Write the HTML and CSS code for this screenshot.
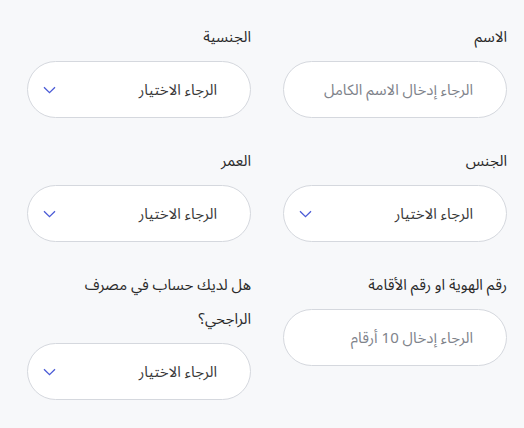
FILE: index.html
```html
<!DOCTYPE html>
<html lang="ar" dir="rtl">
<head>
<meta charset="utf-8">
<link rel="stylesheet" href="styles.css">
</head>
<body>
<form class="form">
  <div class="field">
    <label class="label">الاسم</label>
    <div class="control"><span class="placeholder">الرجاء إدخال الاسم الكامل</span></div>
  </div>
  <div class="field">
    <label class="label">الجنسية</label>
    <div class="control select"><span class="value">الرجاء الاختيار</span><svg class="chev" width="13" height="8" viewBox="0 0 13 8"><path d="M1 1.2l5.5 5.5 5.5-5.5" fill="none" stroke="#4a5bd6" stroke-width="1.3"/></svg></div>
  </div>
  <div class="field">
    <label class="label">الجنس</label>
    <div class="control select"><span class="value">الرجاء الاختيار</span><svg class="chev" width="13" height="8" viewBox="0 0 13 8"><path d="M1 1.2l5.5 5.5 5.5-5.5" fill="none" stroke="#4a5bd6" stroke-width="1.3"/></svg></div>
  </div>
  <div class="field">
    <label class="label">العمر</label>
    <div class="control select"><span class="value">الرجاء الاختيار</span><svg class="chev" width="13" height="8" viewBox="0 0 13 8"><path d="M1 1.2l5.5 5.5 5.5-5.5" fill="none" stroke="#4a5bd6" stroke-width="1.3"/></svg></div>
  </div>
  <div class="field">
    <label class="label">رقم الهوية او رقم الأقامة</label>
    <div class="control"><span class="placeholder">الرجاء إدخال 10 أرقام</span></div>
  </div>
  <div class="field">
    <label class="label">هل لديك حساب في مصرف<br>الراجحي؟</label>
    <div class="control select"><span class="value">الرجاء الاختيار</span><svg class="chev" width="13" height="8" viewBox="0 0 13 8"><path d="M1 1.2l5.5 5.5 5.5-5.5" fill="none" stroke="#4a5bd6" stroke-width="1.3"/></svg></div>
  </div>
</form>
</body>
</html>
```
FILE: styles.css
```css
html, body {
  margin: 0;
  padding: 0;
  background: #f7f8fa;
}
body {
  font-family: "Noto Sans Arabic", "DejaVu Sans", "Noto Sans", sans-serif;
  color: #222;
}
.form {
  display: grid;
  grid-template-columns: 224px 224px;
  column-gap: 32px;
  row-gap: 26px;
  align-items: start;
  padding: 20px 17px 0 0;
  width: 480px;
}
.field {
  display: flex;
  flex-direction: column;
}
.label {
  font-size: 15px;
  line-height: 34px;
  color: #2a2a2a;
  margin-bottom: 7px;
}
.control {
  box-sizing: border-box;
  height: 57px;
  border: 1px solid #d5d8de;
  border-radius: 29px;
  background: #fff;
  display: flex;
  align-items: center;
  justify-content: space-between;
  padding: 0 33px 0 15px;
  font-size: 15px;
}
.placeholder {
  color: #80838b;
}
.value {
  color: #3a3a3a;
  font-weight: 400;
}
.chev {
  display: block;
  margin-top: 1px;
}
```
